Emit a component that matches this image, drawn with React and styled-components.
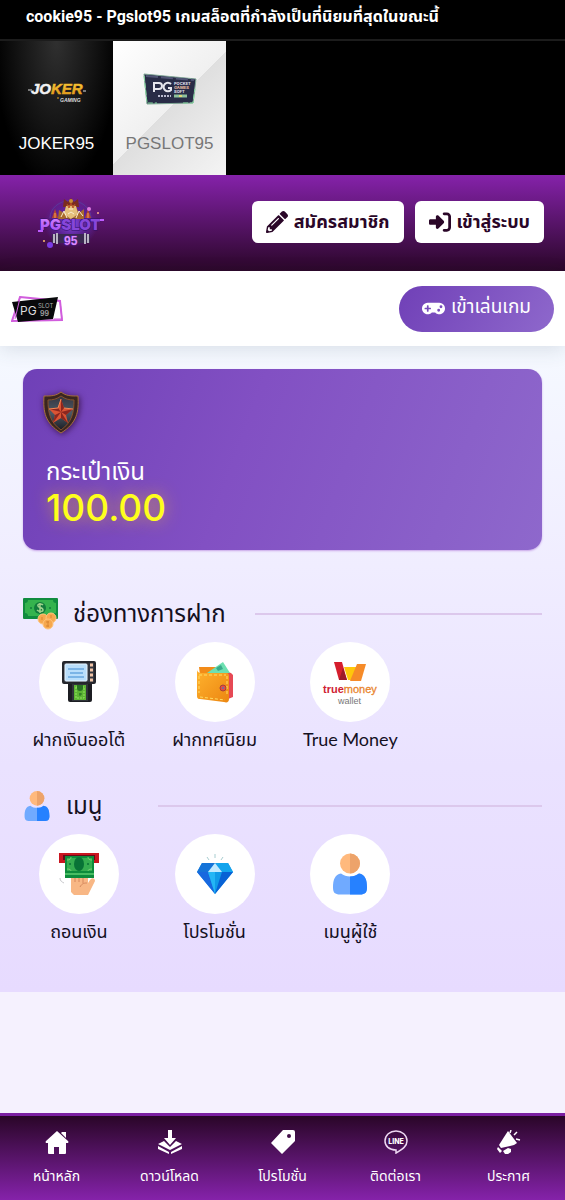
import styled, { createGlobalStyle } from 'styled-components'
import { FaPencilAlt, FaGamepad } from 'react-icons/fa'
import { FaRightToBracket } from 'react-icons/fa6'

const App = () => {
  return (
    <>
      <GlobalStyle />
      <Page>
        <TitleBar>
          <h1>cookie95 - Pgslot95 เกมสล็อตที่กำลังเป็นที่นิยมที่สุดในขณะนี้</h1>
        </TitleBar>
        <Providers>
          <ProviderButton type='button'>
            <JokerLogo />
            <span>JOKER95</span>
          </ProviderButton>
          <ProviderButton type='button' $active>
            <PgLogo />
            <span>PGSLOT95</span>
          </ProviderButton>
        </Providers>
        <Header>
          <BrandLogo />
          <HeaderActions>
            <HeaderButton type='button'>
              <FaPencilAlt />
              <span>สมัครสมาชิก</span>
            </HeaderButton>
            <HeaderButton type='button'>
              <FaRightToBracket />
              <span>เข้าสู่ระบบ</span>
            </HeaderButton>
          </HeaderActions>
        </Header>
        <PlayBar>
          <SmallLogo />
          <PlayButton type='button'>
            <FaGamepad />
            <span>เข้าเล่นเกม</span>
          </PlayButton>
        </PlayBar>
        <Main>
          <WalletCard>
            <ShieldIcon />
            <WalletLabel>กระเป๋าเงิน</WalletLabel>
            <Balance>100.00</Balance>
          </WalletCard>
          {sections.map(({ id, icon, title, items }) => (
            <Section key={id}>
              <SectionHeader>
                {icon}
                <h2>{title}</h2>
                <hr />
              </SectionHeader>
              <MenuGrid>
                {items.map((item) => (
                  <MenuButton type='button' key={item.text}>
                    <Circle>{item.icon}</Circle>
                    <span>{item.text}</span>
                  </MenuButton>
                ))}
              </MenuGrid>
            </Section>
          ))}
        </Main>
        <BottomNav>
          {navLinks.map(({ text, icon }) => (
            <NavLink href='#' key={text}>
              {icon}
              <span>{text}</span>
            </NavLink>
          ))}
        </BottomNav>
      </Page>
    </>
  )
}

export default App

const JokerLogo = () => (
  <svg width='58' height='26' viewBox='0 -3 58 26'>
    <defs>
      <linearGradient id='gold' x1='0' y1='0' x2='0' y2='1'>
        <stop offset='0' stopColor='#ffe04a' />
        <stop offset='1' stopColor='#d98a12' />
      </linearGradient>
    </defs>
    <g fontFamily='Liberation Sans, sans-serif' fontWeight='700' fontStyle='italic'>
      <text x='3' y='12' fontSize='15'>
        <tspan fill='#f2f2f2' stroke='#f2f2f2' strokeWidth='.5'>JO</tspan>
        <tspan fill='url(#gold)' stroke='#eba91f' strokeWidth='.5'>KER</tspan>
      </text>
      <text x='32' y='20' fontSize='5' fill='#ddd'>GAMING</text>
    </g>
    <path d='M0 8h4M55 9h3' stroke='#ddd' strokeWidth='1' />
    <path d='M29 16h2' stroke='#e4a21c' />
  </svg>
)

const PgLogo = () => (
  <svg width='54' height='32' viewBox='0 0 54 32'>
    <path d='M1 1 53 6 50 30 4 31Z' fill='#292c47' stroke='#7fa695' />
    <path d='M3 3 51 7' stroke='#505575' strokeWidth='2' strokeDasharray='12 3' />
    <path d='M1 3 4 30 14 30M40 30h10l2-14' fill='none' stroke='#86d9a0' strokeDasharray='5 2' />
    <g fill='none' stroke='#e6e6ee' strokeWidth='2'>
      <path d='M11 19V10h5a3 3 0 0 1 0 6h-4' />
      <path d='M28 11a4.3 4.3 0 1 0 0 6v-2h-3' />
    </g>
    <g fontFamily='Inter, sans-serif' fontWeight='800' fontSize='4' fill='#d9d9e5'>
      <text x='31' y='12'>POCKET</text>
      <text x='31' y='16' fill='#e0b7a0'>GAMES</text>
      <text x='31' y='20'>SOFT</text>
    </g>
    <path d='M15 23h13' stroke='#b9bad0' strokeWidth='2' strokeDasharray='2 1' />
    <path d='M31 23h13' stroke='#8dc19d' strokeWidth='3' />
    <path d='M36 23h3' stroke='#dfd878' strokeWidth='2' />
  </svg>
)

const BrandLogo = () => (
  <svg width='68' height='52' viewBox='0 0 68 52' role='img' aria-label='PGSLOT 95'>
    <defs>
      <radialGradient id='glow'>
        <stop offset='0' stopColor='#8c4df0' />
        <stop offset='.7' stopColor='#5928a8' stopOpacity='.5' />
        <stop offset='1' stopColor='#5928a8' stopOpacity='0' />
      </radialGradient>
      <linearGradient id='word' x1='0' y1='0' x2='0' y2='1'>
        <stop offset='0' stopColor='#dc8bff' />
        <stop offset='1' stopColor='#9a45f5' />
      </linearGradient>
    </defs>
    <ellipse cx='34' cy='27' rx='27' ry='25' fill='url(#glow)' />
    <path d='M13 22a20 17 0 0 1 41 0' fill='none' stroke='#5a3a9c' />
    <path d='M27 3l4 3 3-4 3 4 4-3 1 8H26z' fill='#7a2c20' />
    <path d='M21 23l1-9 5 3 3-8h8l4 8 5-4v10z' fill='#a86a2d' />
    <path d='M29 10h10l2 8-7 5-7-5z' fill='#e4c07c' />
    <path d='M24 21l3-6 3 7M39 22l3-7 4 5M32 13h4M31 18l3-2 3 2' fill='none' stroke='#f9edce' />
    <path d='M30 8l2 4 2-5 2 5 2-4' fill='none' stroke='#b94b24' />
    <circle cx='34' cy='5' r='2' fill='#c98f35' />
    <path d='M18 13l3 9h-6zM51 13l3 9h-6z' fill='#b7482d' />
    <path d='M18 17v5M51 17v5' stroke='#f0a060' />
    <path d='M15 38h38v9H15z' fill='#3a2a52' />
    <path d='M17 38v9M20 37v11M48 37v11M51 38v9' stroke='#b8b2c4' strokeWidth='2' />
    <text x='3' y='34' fontFamily='Inter, sans-serif' fontSize='15' fontWeight='900' stroke='#2f0f66' strokeWidth='1' paintOrder='stroke'>
      <tspan fill='url(#word)'>PG</tspan>
      <tspan fill='#8746da'>SLOT</tspan>
    </text>
    <text x='27' y='49' fontFamily='Liberation Sans, sans-serif' fontSize='12' fontWeight='700' fill='#dc8cff' stroke='#582099' strokeWidth='1' paintOrder='stroke'>95</text>
    <path d='M1 35h5M63 24h4' stroke='#bd5cff' strokeWidth='2' />
    <circle cx='13' cy='49' r='3' fill='#7a3be5' />
    <circle cx='7' cy='45' r='1' fill='#ffc06e' />
    <circle cx='52' cy='13' r='2' fill='#df79df' />
    <circle cx='61' cy='17' r='1' fill='#ffaf88' />
  </svg>
)

const SmallLogo = () => (
  <svg width='52' height='28' viewBox='0 0 52 28' role='img' aria-label='PG SLOT 99'>
    <path d='M9 2 49 6 51 25 1 26Z' fill='none' stroke='#d15ddd' strokeWidth='2' />
    <path d='M1 7 47 2 42 24 7 27Z' fill='#08090b' />
    <path d='M9 3 4 24M43 24h8L49 6' fill='none' stroke='#d15ddd' />
    <g fontFamily='Inter, sans-serif' fill='#dedede'>
      <text x='9' y='20' fontSize='12'>PG</text>
      <text x='27' y='13' fontSize='6' fill='#aaa'>SLOT</text>
      <text x='29' y='21' fontSize='7' fontWeight='700' fill='#999'>99</text>
    </g>
  </svg>
)

const ShieldIcon = () => (
  <Shield width='40' height='48' viewBox='3 0 40 48'>
    <defs>
      <linearGradient id='steel' x1='0' y1='0' x2='0' y2='1'>
        <stop offset='0' stopColor='#343541' />
        <stop offset='.5' stopColor='#4c5964' />
        <stop offset='1' stopColor='#1b1d25' />
      </linearGradient>
    </defs>
    <path d='M21 3c5 4 10 4 17 4 1 16-1 27-17 37C5 34 3 23 4 7c7 0 12 0 17-4z' fill='#3a2620' stroke='#a8703c' />
    <path d='M21 7c4 3 8 4 13 4 0 13-2 22-13 30C10 33 8 24 8 11c5 0 9-1 13-4z' fill='url(#steel)' stroke='#87512c' />
    <path d='M21 10l3 9 9 1-7 6 2 8-7-5-8 5 2-8-6-6 9-1z' fill='#da5434' />
    <path d='M21 10v13l3-4zM33 20l-12 3 5 3zM28 34l-7-11v6zM13 34l8-11-6 3zM9 20l12 3-3-4z' fill='#8b261f' />
    <path d='M21 10l-3 9M9 20l9-1M24 19l9 1' stroke='#f48955' />
  </Shield>
)

const CashIcon = () => (
  <svg width='35' height='34' viewBox='0 0 35 34'>
    <rect y='1' width='35' height='21' rx='1' fill='#118c3f' />
    <path d='M5 3h25a3 3 0 0 0 3 3v10a3 3 0 0 0-3 3H5a3 3 0 0 0-3-3V6a3 3 0 0 0 3-3z' fill='#35b34e' />
    <circle cx='17' cy='11' r='6' fill='#117b3c' />
    <circle cx='8' cy='11' r='1' fill='#117b3c' />
    <circle cx='27' cy='11' r='1' fill='#117b3c' />
    <path d='M20 8c-2-2-6-1-5 1 0 2 5 1 5 4 0 2-4 2-6 0M17 6v10' fill='none' stroke='#9ed18b' strokeWidth='1.5' />
    <g fill='#f6a84e' stroke='#ffc47d'>
      <circle cx='20' cy='22' r='5' />
      <circle cx='28' cy='21' r='5' />
      <circle cx='25' cy='27' r='5' />
    </g>
    <path d='M25 24v6M23 25h3M23 29h3M19 20v3M28 18v3' stroke='#d98430' />
  </svg>
)

const UserIcon = ({ width, height }) => (
  <svg width={width} height={height} viewBox='0 0 34 41'>
    <circle cx='17' cy='10' r='10' fill='#ffb97d' />
    <path d='M17 0a10 10 0 0 1 0 20z' fill='#eda36a' />
    <path d='M8 20c5 4 13 4 18 0 6 1 8 6 8 14 0 5-2 7-7 7H7c-5 0-7-2-7-7 0-8 2-13 8-14z' fill='#70aaff' />
    <path d='M17 23c4 0 6-1 9-3 6 1 8 6 8 14 0 5-2 7-7 7H17z' fill='#2681ff' />
  </svg>
)

const AtmIcon = () => (
  <svg width='34' height='42' viewBox='0 0 34 42'>
    <rect x='6' y='20' width='24' height='21' rx='2' fill='#1c1d22' />
    <rect x='1' y='1' width='32' height='21' rx='1' fill='#343740' stroke='#24262c' strokeWidth='2' />
    <rect x='3' y='3' width='22' height='17' rx='1' fill='#b9defb' stroke='#e7f5ff' />
    <path d='M6 8h16M8 12h13M6 16h16' stroke='#3f8bd2' />
    <path d='M28 4h3M28 9h3M28 14h3M28 19h3' stroke='#f1c4a6' strokeWidth='3' />
    <path d='M10 23h16v17H10z' fill='#30343a' />
    <path d='M12 24h12v15H12z' fill='#5cb533' />
    <path d='M14 26h8v11h-8z' fill='none' stroke='#94e165' strokeDasharray='2 1' />
    <path d='M15 24h6v3a3 3 0 0 1-6 0z' fill='#287124' />
    <path d='M18 32v3M17 33h3' stroke='#287124' />
  </svg>
)

const WalletIcon = () => (
  <svg width='38' height='42' viewBox='0 0 38 42'>
    <defs>
      <linearGradient id='leather' x1='0' y1='0' x2='1' y2='1'>
        <stop offset='0' stopColor='#ffb32e' />
        <stop offset='1' stopColor='#ec8611' />
      </linearGradient>
    </defs>
    <path d='M28 10l7 2 2 2v22l-5 2z' fill='#e64955' />
    <path d='M3 6h25l4 7-28 1z' fill='#f28b18' />
    <path d='M11 12 27 1l7 11z' fill='#6de0b1' />
    <path d='M20 7l5-3 2 4-5 2z' fill='#39aa8c' />
    <path d='M1 8c0 4 3 4 7 4h22c3 0 3 2 3 4v22c0 3-2 4-5 3L4 38c-3 0-3-2-3-4z' fill='url(#leather)' />
    <path d='M3 14h27M4 36l25 3M3 15v17M31 15v20' stroke='#ffdd64' strokeDasharray='3 2' fill='none' />
    <circle cx='27' cy='27' r='3' fill='#e54c45' stroke='#a64138' />
    <circle cx='27' cy='27' r='1' fill='#6176ae' />
  </svg>
)

const TrueMoneyIcon = () => (
  <svg width='58' height='50' viewBox='0 -4 58 50'>
    <path d='M13 1h8l5 18h-8z' fill='#d51e2d' />
    <path d='M23 6l4 13h8V6h-5z' fill='#ffc70b' />
    <path d='M18 19h8l-4-12z' fill='#9d1929' />
    <path d='M36 3h9l-5 17H29z' fill='#f68b28' />
    <g fontFamily='Liberation Sans, sans-serif'>
      <text x='2' y='32' fontSize='11' fontWeight='700'>
        <tspan fill='#cf2034'>true</tspan>
        <tspan fill='#e9852d' fontWeight='400' stroke='#e9852d' strokeWidth='.3'>money</tspan>
      </text>
      <text x='17' y='43' fontSize='9' fill='#777'>wallet</text>
    </g>
  </svg>
)

const WithdrawIcon = () => (
  <svg width='42' height='44' viewBox='0 0 42 44'>
    <path d='M1 1h40v10H1z' fill='#c91620' />
    <path d='M5 3h32v5H5z' fill='#650c18' />
    <path d='M13 23v17l3 3h14l7-14c0-3-3-4-5-1l-2 3v-8z' fill='#f8b785' />
    <path d='M17 26v4M21 26v4M25 26v5M22 35c2-4 5-4 7-4' fill='none' stroke='#d6885d' />
    <path d='M7 4h29v22H7z' fill='#0d8c3c' />
    <path d='M9 6h25v13H9z' fill='#35ad50' />
    <ellipse cx='21' cy='12' rx='5' ry='7' fill='#087336' />
    <path d='M7 22h29' stroke='#48bd63' strokeWidth='2' />
    <path d='M9 8c3 0 4-1 4-3M34 8c-3 0-4-1-4-3M9 17c3 0 4 1 4 2M34 17c-3 0-4 1-4 2' stroke='#74cf74' fill='none' />
    <circle cx='12' cy='12' r='1' fill='#087336' />
    <circle cx='30' cy='12' r='1' fill='#087336' />
    <path d='M2 26c0 3 2 4 4 5' fill='none' stroke='#c6c7cb' />
  </svg>
)

const DiamondIcon = () => (
  <svg width='36' height='42' viewBox='0 0 36 42'>
    <path d='M5 10h26l5 9-18 22L0 19z' fill='#118de8' />
    <path d='M5 10 0 19h11l7-9z' fill='#1573d8' />
    <path d='M0 19h11l7 22z' fill='#1868df' />
    <path d='M11 19h7v22z' fill='#24b6f5' />
    <path d='M18 19h7l-7 22z' fill='#119be8' />
    <path d='M25 19h11L18 41z' fill='#0862d5' />
    <path d='M31 10l5 9H25l-7-9z' fill='#13a4ed' />
    <path d='M18 10 11 19h14z' fill='#c1e9ff' />
    <path d='M18 1v4M10 4l2 3M26 4l-2 3' stroke='#a8cdd0' />
  </svg>
)

const HomeIcon = () => (
  <svg width='24' height='24' viewBox='0 0 24 24' fill='#fff'>
    <path d='M12 1 1 11q-1 1 0 2h2v10q0 1 1 1h5v-7h5v7h6q1 0 1-1V13h2q1-1 0-2z' />
    <path d='M17 2h4v6l-5-5z' />
  </svg>
)

const DownloadIcon = () => (
  <svg width='24' height='24' viewBox='0 0 24 24' fill='#fff'>
    <path d='M10 0h4v8h4l-6 7-6-7h4z' />
    <path d='M6 11 0 14l12 6 12-6-6-3-6 6z' />
    <path d='M0 16l11 6v2L0 19zM24 16l-11 6v2l11-5z' />
  </svg>
)

const TagIcon = () => (
  <svg width='24' height='24' viewBox='0 0 24 24' fill='#fff'>
    <path fillRule='evenodd' d='M12 0h10a2 2 0 0 1 2 2v9L11 24 0 13zM18 4a2 2 0 1 0 0 4 2 2 0 0 0 0-4z' />
  </svg>
)

const LineIcon = () => (
  <svg width='24' height='24' viewBox='0 0 24 24'>
    <path d='M12 1c6 0 11 4 11 10 0 5-4 8-11 12v-3C5 20 1 16 1 11 1 5 6 1 12 1z' fill='none' stroke='#eed8f3' strokeWidth='1.5' />
    <text x='12' y='14' textAnchor='middle' fontFamily='Inter, sans-serif' fontSize='7' fontWeight='800' fill='#fff'>LINE</text>
  </svg>
)

const MegaphoneIcon = () => (
  <svg width='24' height='24' viewBox='0 0 24 24' fill='#fff'>
    <path d='M11 1 20 13l-3 2-13 3-2-3 7-11z' />
    <path d='M1 17l4 4-2 2-3-4zM6 21l5-3 3 1v3l-3 2H8z' />
    <path d='M13 3l1-3M17 5l3-3M19 9l4 1' stroke='#fff' strokeWidth='1.5' />
  </svg>
)

const sections = [
  {
    id: 'deposit',
    icon: <CashIcon />,
    title: 'ช่องทางการฝาก',
    items: [
      { text: 'ฝากเงินออโต้', icon: <AtmIcon /> },
      { text: 'ฝากทศนิยม', icon: <WalletIcon /> },
      { text: 'True Money', icon: <TrueMoneyIcon /> },
    ],
  },
  {
    id: 'menu',
    icon: <UserIcon width={28} height={30} />,
    title: 'เมนู',
    items: [
      { text: 'ถอนเงิน', icon: <WithdrawIcon /> },
      { text: 'โปรโมชั่น', icon: <DiamondIcon /> },
      { text: 'เมนูผู้ใช้', icon: <UserIcon width={34} height={42} /> },
    ],
  },
]

const navLinks = [
  { text: 'หน้าหลัก', icon: <HomeIcon /> },
  { text: 'ดาวน์โหลด', icon: <DownloadIcon /> },
  { text: 'โปรโมชั่น', icon: <TagIcon /> },
  { text: 'ติดต่อเรา', icon: <LineIcon /> },
  { text: 'ประกาศ', icon: <MegaphoneIcon /> },
]

const GlobalStyle = createGlobalStyle`
  *, *::before, *::after {
    box-sizing: border-box;
  }

  body {
    margin: 0;
    background: #f5f1fe;
    font-family: Lato, 'Noto Sans Thai', 'Noto Sans', sans-serif;
    color: #15101f;
  }

  h1, h2, p {
    margin: 0;
    font-weight: 400;
  }

  button {
    border: 0;
    padding: 0;
    background: none;
    color: inherit;
    font-family: inherit;
    cursor: pointer;
  }

  svg {
    display: block;
    flex-shrink: 0;
  }
`

const Page = styled.div`
  display: flex;
  flex-direction: column;
  min-height: 100vh;
`

const TitleBar = styled.div`
  padding: 5px 26px 10px;
  background: #000;
  border-bottom: 2px solid #1c1c1c;

  h1 {
    font-family: Roboto, 'Noto Sans Thai', sans-serif;
    font-size: 16px;
    font-weight: 700;
    line-height: 24px;
    color: #fff;
    white-space: nowrap;
  }
`

const Providers = styled.div`
  display: flex;
  background: #000;
`

const ProviderButton = styled.button`
  display: flex;
  flex-direction: column;
  align-items: center;
  justify-content: space-between;
  width: 20%;
  height: 134px;
  padding: 32px 0 19px;
  background: ${({ $active }) =>
    $active
      ? 'linear-gradient(135deg, #fff 0%, #f0f0f0 50%, #dfdfdf 50%, #f4f4f4 100%)'
      : 'radial-gradient(ellipse at 50% 0, #303030 0%, #151515 45%, #000 78%)'};

  svg {
    margin: ${({ $active }) => ($active ? '0' : '6px 0 0')};
  }

  span {
    font-family: 'Liberation Sans', sans-serif;
    font-size: 17px;
    line-height: 24px;
    color: ${({ $active }) => ($active ? '#777' : '#fff')};
  }
`

const Header = styled.header`
  display: flex;
  align-items: center;
  justify-content: space-between;
  height: 96px;
  padding: 0 21px 3px 37px;
  background: linear-gradient(#8522aa, #2a0628);
`

const HeaderActions = styled.div`
  display: flex;
  gap: 11px;
`

const HeaderButton = styled.button`
  display: flex;
  align-items: center;
  gap: 6px;
  height: 42px;
  padding: 0 14px;
  border-radius: 6px;
  background: #fff;
  color: #2a0628;
  font-size: 18px;
  font-weight: 700;
  line-height: 30px;
  white-space: nowrap;

  svg {
    width: 22px;
    height: 22px;
  }

  span {
    padding-bottom: 2px;
  }
`

const PlayBar = styled.div`
  position: relative;
  display: flex;
  align-items: center;
  justify-content: space-between;
  height: 75px;
  padding: 0 11px;
  background: #fff;
  box-shadow: 0 4px 18px rgba(60, 70, 90, 0.14);
`

const PlayButton = styled.button`
  display: flex;
  align-items: center;
  gap: 6px;
  height: 46px;
  padding: 0 23px;
  border-radius: 23px;
  background: linear-gradient(120deg, #7040b7, #8e68cc);
  color: #fff;
  font-size: 19px;
  line-height: 28px;
  white-space: nowrap;

  svg {
    width: 23px;
    height: 23px;
  }

  span {
    padding-bottom: 5px;
  }
`

const Main = styled.main`
  padding: 23px 23px 47px;
  background: linear-gradient(#f5f9ff 0%, #f0edff 34%, #eae2ff 65%, #e7dbff 100%);
`

const WalletCard = styled.section`
  height: 181px;
  padding: 20px 20px 0;
  border-radius: 14px;
  background: linear-gradient(110deg, #6f40b7, #8250c3 42%, #8e68cc);
  box-shadow: 0 1px 2px #c8a4e8;
`

const Shield = styled.svg`
  filter: drop-shadow(1px 1px 3px #3b1450);
`

const WalletLabel = styled.p`
  margin: 14px 0 0 3px;
  font-size: 24px;
  line-height: 40px;
  color: #fff;
`

const Balance = styled.p`
  margin-left: 3px;
  font-family: Inter, sans-serif;
  font-size: 37px;
  font-weight: 500;
  line-height: 34px;
  color: #ffff1c;
  text-shadow: 0 0 16px rgba(230, 170, 60, 0.8);
`

const Section = styled.section`
  margin-top: 44px;

  & + & {
    margin-top: 33px;
  }
`

const SectionHeader = styled.div`
  display: flex;
  align-items: center;
  gap: 15px;
  height: 40px;

  h2 {
    min-width: 63px;
    padding-bottom: 2px;
    font-size: 24px;
    line-height: 38px;
    white-space: nowrap;
  }

  hr {
    flex: 1;
    margin: 0 0 0 14px;
    border: 0;
    border-top: 2px solid #dcc8ec;
  }
`

const MenuGrid = styled.div`
  display: grid;
  grid-template-columns: repeat(4, 1fr);
  margin: 8px -12px 0;
`

const MenuButton = styled.button`
  display: flex;
  flex-direction: column;
  align-items: center;
  gap: 3px;
  font-size: 18px;
  line-height: 28px;
  white-space: nowrap;
`

const Circle = styled.span`
  display: grid;
  place-items: center;
  width: 80px;
  height: 80px;
  border-radius: 50%;
  background: #fff;
`

const BottomNav = styled.nav`
  display: grid;
  grid-template-columns: repeat(5, 1fr);
  height: 87px;
  margin-top: auto;
  border-top: 3px solid #7b1fa2;
  background: linear-gradient(#2a0628, #8522aa);
`

const NavLink = styled.a`
  display: flex;
  flex-direction: column;
  align-items: center;
  gap: 9px;
  padding-top: 14px;
  color: #fff;
  font-size: 14px;
  line-height: 26px;
  text-decoration: none;
  white-space: nowrap;
`
